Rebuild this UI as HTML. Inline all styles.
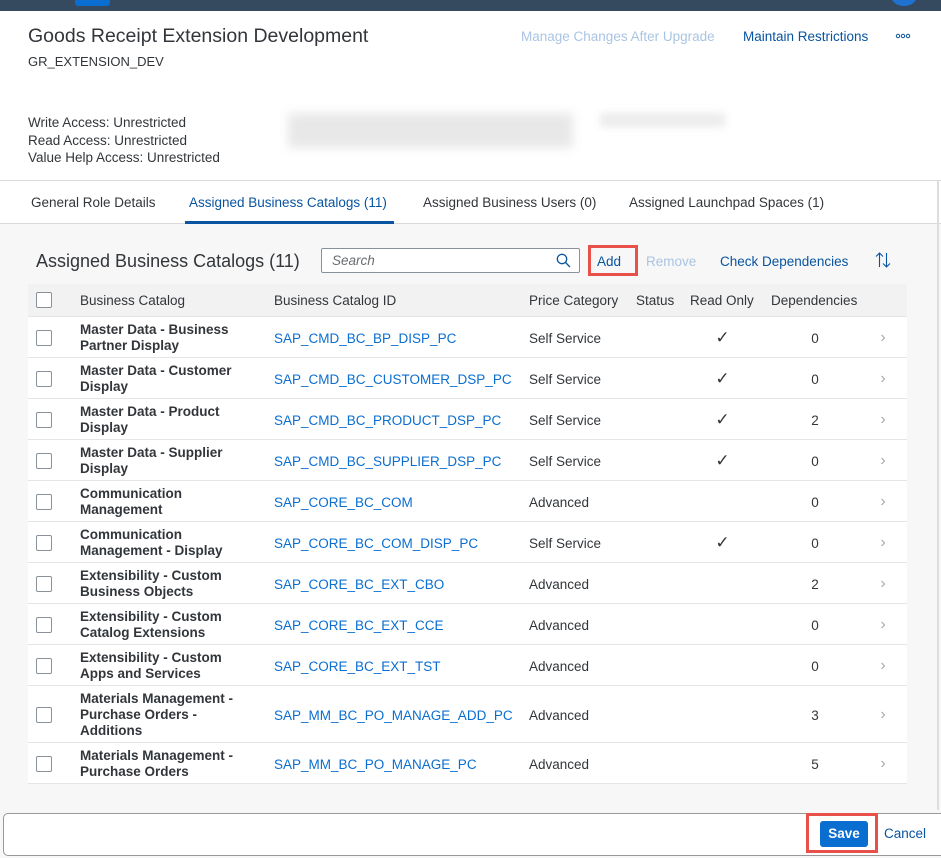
<!DOCTYPE html>
<html><head><style>
*{box-sizing:border-box;margin:0;padding:0}
body{width:941px;height:858px;overflow:hidden;background:#f7f7f7;font-family:"Liberation Sans",sans-serif;color:#32363a;position:relative;font-size:13.5px}
.abs{position:absolute}
.top{left:0;top:0;width:941px;height:11px;background:#354a5f}
.hdr{left:0;top:11px;width:941px;height:169px;background:#fff}
.tabs{left:0;top:180px;width:941px;height:44px;background:#fff;border-top:1px solid #d9d9d9;border-bottom:1px solid #d9d9d9}
.tab{position:absolute;top:14px;font-size:13.5px;color:#32363a}
.link{color:#0a6ed1}
.dk{color:#0854a0}
table{border-collapse:collapse;position:absolute;left:28px;top:284px;width:879px;background:#fff;table-layout:fixed}
th{height:32px;background:#f2f2f2;font-weight:normal;text-align:left;font-size:13.5px;color:#32363a;border-bottom:1px solid #e5e5e5;white-space:nowrap;padding-top:1px}
td{height:41px;border-bottom:1px solid #e5e5e5;font-size:13.5px;vertical-align:middle;white-space:nowrap;padding-top:3px}
td.n{font-weight:bold;line-height:16px}
.cb{display:inline-block;width:16px;height:16px;border:1px solid #89919a;border-radius:2px;background:#fff;vertical-align:middle}
.ar{color:#aaa;font-size:16px;text-align:center}
.ck{text-align:center;font-size:17px;padding-right:16px}
</style></head><body>
<div class="abs top"></div>
<div class="abs" style="left:75px;top:0;width:35px;height:6px;background:#0a6ed1;border-radius:0 0 3px 3px"></div>
<div class="abs" style="left:891px;top:-14px;width:26px;height:20px;background:#1f72cf;border-radius:50%"></div>
<div class="abs hdr"></div>
<div class="abs" style="left:28px;top:25px;font-size:19.5px">Goods Receipt Extension Development</div>
<div class="abs" style="left:28px;top:54px;font-size:13px">GR_EXTENSION_DEV</div>
<div class="abs" style="left:521px;top:29px;font-size:13.5px;color:#a9c4e3">Manage Changes After Upgrade</div>
<div class="abs dk" style="left:743px;top:29px;font-size:13.5px">Maintain Restrictions</div>
<svg class="abs" style="left:895px;top:33px" width="16" height="6"><circle cx="3" cy="3" r="1.7" fill="none" stroke="#0854a0"/><circle cx="8" cy="3" r="1.7" fill="none" stroke="#0854a0"/><circle cx="13" cy="3" r="1.7" fill="none" stroke="#0854a0"/></svg>
<div class="abs" style="left:28px;top:114px;font-size:13.5px;line-height:17.5px">Write Access: Unrestricted<br>Read Access: Unrestricted<br>Value Help Access: Unrestricted</div>
<div class="abs" style="left:288px;top:113px;width:285px;height:35px;background:#e8e8e8;filter:blur(5px)"></div>
<div class="abs" style="left:600px;top:113px;width:125px;height:14px;background:#ececec;filter:blur(4px)"></div>
<div class="abs tabs">
<div class="tab" style="left:31px">General Role Details</div>
<div class="tab dk" style="left:189px">Assigned Business Catalogs (11)</div>
<div class="abs" style="left:185px;top:40px;width:209px;height:3px;background:#0854a0"></div>
<div class="tab" style="left:423px">Assigned Business Users (0)</div>
<div class="tab" style="left:629px">Assigned Launchpad Spaces (1)</div>
</div>
<div class="abs" style="left:937px;top:180px;width:2px;height:630px;background:#ddd"></div>
<div class="abs" style="left:36px;top:251px;font-size:18px">Assigned Business Catalogs (11)</div>
<div class="abs" style="left:321px;top:248px;width:259px;height:25px;border:1px solid #89919a;border-radius:2px;background:#fff"><span style="position:absolute;left:10px;top:4px;font-style:italic;color:#6a6d70">Search</span>
<svg style="position:absolute;right:8px;top:4px" width="15" height="15" viewBox="0 0 15 15"><circle cx="6" cy="6" r="4.7" fill="none" stroke="#0854a0" stroke-width="1.3"/><path d="M9.5 9.5L14 14" stroke="#0854a0" stroke-width="1.3"/></svg></div>
<div class="abs" style="left:588px;top:245px;width:50px;height:31px;border:3px solid #e8504a"></div>
<div class="abs dk" style="left:597px;top:254px">Add</div>
<div class="abs" style="left:646px;top:254px;color:#a9c4e3">Remove</div>
<div class="abs dk" style="left:720px;top:254px">Check Dependencies</div>
<svg class="abs" style="left:875px;top:252px" width="16" height="16" viewBox="0 0 16 16"><path d="M4.5 15V1M1 4.5l3.5-3.5 3.5 3.5M11.5 1v14M8 11.5l3.5 3.5 3.5-3.5" fill="none" stroke="#0854a0" stroke-width="1.1"/></svg>
<table>
<colgroup><col style="width:52px"><col style="width:194px"><col style="width:255px"><col style="width:107px"><col style="width:54px"><col style="width:81px"><col style="width:88px"><col></colgroup>
<tr><th style="padding-left:8px"><span class="cb"></span></th><th>Business Catalog</th><th>Business Catalog ID</th><th>Price Category</th><th>Status</th><th>Read Only</th><th>Dependencies</th><th></th></tr>
<tr><td style="padding-left:8px"><span class="cb"></span></td><td class="n">Master Data - Business<br>Partner Display</td><td class="link">SAP_CMD_BC_BP_DISP_PC</td><td>Self Service</td><td></td><td class="ck">✓</td><td style="text-align:center">0</td><td class="ar">›</td></tr>
<tr><td style="padding-left:8px"><span class="cb"></span></td><td class="n">Master Data - Customer<br>Display</td><td class="link">SAP_CMD_BC_CUSTOMER_DSP_PC</td><td>Self Service</td><td></td><td class="ck">✓</td><td style="text-align:center">0</td><td class="ar">›</td></tr>
<tr><td style="padding-left:8px"><span class="cb"></span></td><td class="n">Master Data - Product<br>Display</td><td class="link">SAP_CMD_BC_PRODUCT_DSP_PC</td><td>Self Service</td><td></td><td class="ck">✓</td><td style="text-align:center">2</td><td class="ar">›</td></tr>
<tr><td style="padding-left:8px"><span class="cb"></span></td><td class="n">Master Data - Supplier<br>Display</td><td class="link">SAP_CMD_BC_SUPPLIER_DSP_PC</td><td>Self Service</td><td></td><td class="ck">✓</td><td style="text-align:center">0</td><td class="ar">›</td></tr>
<tr><td style="padding-left:8px"><span class="cb"></span></td><td class="n">Communication<br>Management</td><td class="link">SAP_CORE_BC_COM</td><td>Advanced</td><td></td><td></td><td style="text-align:center">0</td><td class="ar">›</td></tr>
<tr><td style="padding-left:8px"><span class="cb"></span></td><td class="n">Communication<br>Management - Display</td><td class="link">SAP_CORE_BC_COM_DISP_PC</td><td>Self Service</td><td></td><td class="ck">✓</td><td style="text-align:center">0</td><td class="ar">›</td></tr>
<tr><td style="padding-left:8px"><span class="cb"></span></td><td class="n">Extensibility - Custom<br>Business Objects</td><td class="link">SAP_CORE_BC_EXT_CBO</td><td>Advanced</td><td></td><td></td><td style="text-align:center">2</td><td class="ar">›</td></tr>
<tr><td style="padding-left:8px"><span class="cb"></span></td><td class="n">Extensibility - Custom<br>Catalog Extensions</td><td class="link">SAP_CORE_BC_EXT_CCE</td><td>Advanced</td><td></td><td></td><td style="text-align:center">0</td><td class="ar">›</td></tr>
<tr><td style="padding-left:8px"><span class="cb"></span></td><td class="n">Extensibility - Custom<br>Apps and Services</td><td class="link">SAP_CORE_BC_EXT_TST</td><td>Advanced</td><td></td><td></td><td style="text-align:center">0</td><td class="ar">›</td></tr>
<tr><td style="padding-left:8px;height:57px"><span class="cb"></span></td><td class="n">Materials Management -<br>Purchase Orders -<br>Additions</td><td class="link">SAP_MM_BC_PO_MANAGE_ADD_PC</td><td>Advanced</td><td></td><td></td><td style="text-align:center">3</td><td class="ar">›</td></tr>
<tr><td style="padding-left:8px"><span class="cb"></span></td><td class="n">Materials Management -<br>Purchase Orders</td><td class="link">SAP_MM_BC_PO_MANAGE_PC</td><td>Advanced</td><td></td><td></td><td style="text-align:center">5</td><td class="ar">›</td></tr>
</table>
<div class="abs" style="left:3px;top:813px;width:945px;height:43px;background:#fff;border:1px solid #999;border-radius:5px"></div>
<div class="abs" style="left:806px;top:813px;width:72px;height:40px;border:3px solid #e8504a"></div>
<div class="abs" style="left:820px;top:821px;width:48px;height:26px;background:#0a6ed1;border-radius:3px;color:#fff;font-weight:bold;text-align:center;line-height:26px">Save</div>
<div class="abs dk" style="left:884px;top:826px">Cancel</div>
</body></html>
